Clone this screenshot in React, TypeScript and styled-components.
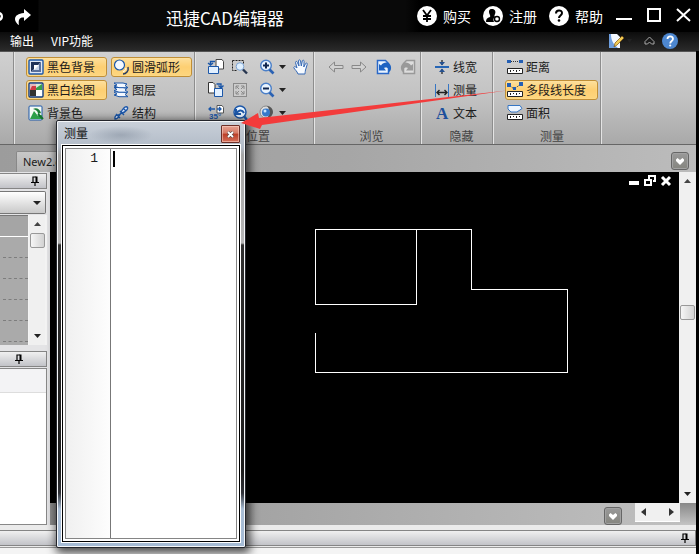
import React from "react";
import styled, { createGlobalStyle, css } from "styled-components";

const Global = createGlobalStyle`
  * { box-sizing: border-box; }
  html, body { margin: 0; background: #000; }
  body { font-family: "Noto Sans CJK SC", "Liberation Sans", sans-serif; font-size: 12px; line-height: 16px; color: #1c1c1c; }
  button, select, textarea { font: inherit; color: inherit; border: 0; padding: 0; margin: 0; background: none; border-radius: 0; outline: 0; }
  svg { display: block; flex: none; overflow: visible; }
`;

const AppFrame = styled.div`
  position: relative;
  min-height: 100vh;
  display: flex;
  flex-direction: column;
  background: #000;
  overflow: hidden;
`;

/* ---------- title and menu ---------- */
const TitleBar = styled.header`
  display: flex;
  align-items: center;
  height: 32px;
  padding-right: 8px;
  background: linear-gradient(90deg, #000 38px, #090909 39px, #090909 58%, #000 60%);
  color: #fff;
`;
const QuickTools = styled.div`
  display: flex;
  gap: 10px;
  width: 166px;
`;
const Title = styled.h1`
  margin: 0;
  padding-top: 3px;
  flex: 1;
  font-size: 17px;
  line-height: 24px;
  font-weight: 400;
  white-space: nowrap;
`;
const Account = styled.nav`
  display: flex;
  gap: 12px;
  margin-right: 12px;
`;
const AccountButton = styled.button`
  display: flex;
  align-items: center;
  gap: 6px;
  font-size: 14px;
  line-height: 20px;
  white-space: nowrap;
`;
const WindowButtons = styled.div`
  display: flex;
  gap: 14px;
`;
const PlainButton = styled.button`
  display: flex;
  align-items: center;
  justify-content: center;
  color: inherit;
`;
const MenuBar = styled.nav`
  display: flex;
  align-items: center;
  height: 19px;
  padding: 0 21px 2px 10px;
  gap: 17px;
  background: linear-gradient(#0c0c0c, #2b2b2b);
  color: #fff;
`;
const MenuItem = styled.button`
  white-space: nowrap;
`;
const MenuTools = styled.div`
  display: flex;
  align-items: center;
  gap: 3px;
  margin-left: auto;
`;

/* ---------- ribbon ---------- */
const Body = styled.div`
  flex: 1;
  display: flex;
  flex-direction: column;
  margin-right: 3px;
  background: #ececec;
`;
const Ribbon = styled.section`
  display: flex;
  height: 94px;
  border-top: 1px solid #555;
  border-bottom: 1px solid #666;
  background: linear-gradient(#d0d0d0, #c2c2c2 50%, #a9a9a9);
`;
const Group = styled.div<{ $width: number; $pad: number }>`
  display: flex;
  flex-direction: column;
  width: ${(p) => p.$width}px;
  padding: 5px 1px 0 ${(p) => p.$pad}px;
  border-right: 1px solid #8d8d8d;
  box-shadow: 1px 0 0 #e4e4e4;
`;
const ToolGrid = styled.div<{ $columns: string; $gap?: number }>`
  display: grid;
  grid-template-columns: ${(p) => p.$columns};
  grid-auto-rows: 20px;
  gap: 3px ${(p) => p.$gap ?? 0}px;
  height: 66px;
`;
const GroupLabel = styled.div<{ $end?: number }>`
  padding: 5px ${(p) => p.$end ?? 0}px 0 0;
  text-align: center;
  color: #444;
`;
const ToolButton = styled.button<{ $active?: boolean }>`
  display: flex;
  align-items: center;
  gap: 3px;
  padding: 0 1px;
  border: 1px solid transparent;
  border-radius: 3px;
  white-space: nowrap;
  ${(p) =>
    p.$active &&
    css`
      border-color: #c08f37;
      background: linear-gradient(#fddf9c, #fdcf72 50%, #fdd67f);
      box-shadow: inset 0 0 1px #fff3c8;
    `}
`;
const IconButton = styled.button`
  display: flex;
  align-items: center;
  gap: 4px;
`;

/* ---------- document tabs ---------- */
const TabRow = styled.div`
  display: flex;
  align-items: flex-end;
  justify-content: space-between;
  height: 27px;
  padding: 0 7px 0 16px;
  background: linear-gradient(90deg, #9c9c9c, #a6a6a6 50%, #bcbcbc);
`;
const Tab = styled.button`
  height: 21px;
  padding: 0 6px;
  border: 1px solid #888;
  border-bottom: 0;
  border-radius: 2px 2px 0 0;
  background: linear-gradient(#c8c8c8, #b4b4b4);
  font-family: "Noto Sans", "Noto Sans CJK SC", sans-serif;
  font-size: 11px;
`;
const DropButton = styled.button`
  display: flex;
  align-items: center;
  justify-content: center;
  width: 18px;
  height: 18px;
  margin: 4px 0 2px;
  border: 1px solid #666;
  border-radius: 3px;
  background: linear-gradient(#999, #85857f);
  box-shadow: inset 0 0 0 1px #a2a2a2;
`;

/* ---------- workspace ---------- */
const Workspace = styled.main`
  flex: 1;
  display: flex;
  min-height: 353px;
`;
const SidePanel = styled.aside`
  display: flex;
  flex-direction: column;
  width: 50px;
  padding: 1px 3px 0 0;
  background: #e4e4e6;
`;
const PanelHeader = styled.div<{ $end: number }>`
  display: flex;
  align-items: center;
  justify-content: flex-end;
  height: 16px;
  padding-right: ${(p) => p.$end}px;
  border: 1px solid #858585;
  border-left: 0;
  background: linear-gradient(#f0f0f0, #c2c3c8);
`;
const ComboWrap = styled.label`
  position: relative;
  display: block;
  margin: 2px 1px 1px 0;
  height: 23px;
  border: 1px solid #777;
  border-left: 0;
  border-radius: 0 2px 2px 0;
  background: linear-gradient(#fff, #c9c9c9);
  svg { position: absolute; right: 4px; top: 9px; pointer-events: none; }
`;
const Combo = styled.select`
  width: 100%;
  height: 100%;
  appearance: none;
`;
const ListArea = styled.div`
  display: flex;
  height: 130px;
  background: #f4f4f4;
`;
const PropertyList = styled.div`
  width: 28px;
  border-top: 1px solid #777;
  background: #aaa;
`;
const PropertyHead = styled.div`
  height: 21px;
  border-bottom: 1px solid #fff;
  background: #a5a5a5;
`;
const PropertyRow = styled.div`
  height: 21px;
  margin-left: 3px;
  border-bottom: 1px dashed #7d7d7d;
`;
const VScroll = styled.div<{ $width: number }>`
  display: flex;
  flex-direction: column;
  align-items: center;
  width: ${(p) => p.$width}px;
  padding: 7px 0;
  background: #f0f0f0;
`;
const Thumb = styled.div`
  width: 15px;
  height: 15px;
  border: 1px solid #999;
  border-radius: 2px;
  background: linear-gradient(90deg, #f6f6f6, #d2d2d2);
`;
const Space = styled.div<{ $size?: number }>`
  flex: ${(p) => (p.$size ? `0 1 ${p.$size}px` : "1")};
`;
const SideBox = styled.div`
  flex: 1;
  margin-top: 1px;
  border: 1px solid #888;
  border-left: 0;
  background: linear-gradient(#f3f3f5 23px, #ddd 23px, #ddd 24px, #fff 24px);
`;
const Gap = styled.div`
  height: 6px;
`;
const Center = styled.div`
  flex: 1;
  min-width: 0;
  display: flex;
  flex-direction: column;
`;
const DrawingRow = styled.div`
  flex: 1;
  display: flex;
  background: #000;
`;
const Canvas = styled.div`
  position: relative;
  flex: 1;
  min-width: 0;
  overflow: hidden;
  color: #fff;
`;
const MdiButtons = styled.div`
  position: absolute;
  top: 3px;
  right: 7px;
  display: flex;
  gap: 4px;
`;
const BottomBar = styled.div`
  display: flex;
  justify-content: flex-end;
  height: 22px;
  background: linear-gradient(90deg, #8c8c8c, #a3a3a3 30%, #c0c0c0);
`;
const HScroll = styled.div`
  display: flex;
  align-items: center;
  justify-content: space-between;
  width: 45px;
  height: 19px;
  margin-left: 13px;
  padding: 0 6px;
  border-bottom: 1px solid #fff;
  background: #f0f0f0;
`;
const Corner = styled.div`
  width: 16px;
  background: linear-gradient(#888, #c4c4c4);
`;
const CommandPanel = styled.footer`
  padding-top: 5px;
  height: 29px;
  background: #ebebeb;
`;
const CommandBody = styled.div`
  height: 8px;
  margin-top: 1px;
  padding-right: 16px;
  border-top: 1px solid #999;
  background: #f4f4f4;
`;

/* ---------- floating measure window ---------- */
const Dialog = styled.section`
  position: absolute;
  left: 56px;
  top: 120px;
  width: 190px;
  height: 428px;
  display: flex;
  flex-direction: column;
  padding: 0 5px 5px;
  border: 1px solid #24262c;
  border-radius: 2px;
  background:
    radial-gradient(ellipse 32px 9px at 64px 14px, rgba(120, 132, 148, 0.45), transparent),
    linear-gradient(#c9d0d9 0, #b3bcc8 26px, #a5a5a5 34px, #b5b5b5 122px, #303030 124px, #1d1d1d 350px, #303238 372px, #a9bdd4 388px, #a6bcd6);
  box-shadow: inset 0 0 0 1px #f4f6f8, 2px 3px 10px 2px rgba(0, 0, 0, 0.7);
`;
const DialogBar = styled.div`
  display: flex;
  align-items: center;
  justify-content: space-between;
  height: 24px;
  padding-left: 2px;
  color: #111;
`;
const CloseButton = styled.button`
  display: flex;
  align-items: center;
  justify-content: center;
  width: 19px;
  height: 18px;
  margin-top: 2px;
  border: 1px solid #6d3028;
  border-radius: 1px;
  background: linear-gradient(#e5a292, #d67965 45%, #bb3d26 50%, #d5705a);
  box-shadow: inset 0 0 0 1px rgba(255, 220, 210, 0.5);
`;
const EditorFrame = styled.div`
  flex: 1;
  display: flex;
  padding: 2px;
  border: 1px solid #000;
  outline: 1px solid #fff;
  background: #fff;
`;
const Editor = styled.div`
  flex: 1;
  min-width: 0;
  display: flex;
  border: 1px solid #858585;
`;
const Gutter = styled.div`
  width: 45px;
  padding: 2px 12px 0 0;
  border-right: 1px solid #777;
  background: linear-gradient(90deg, #f0f0f0, #fdfdfd);
  font-family: "Liberation Mono", monospace;
  font-size: 13px;
  text-align: right;
`;
const Caret = styled.span`
  width: 2px;
  height: 16px;
  margin: 2px 0 0 2px;
  background: #000;
`;
const EditorText = styled.textarea`
  flex: 1;
  min-width: 0;
  padding-top: 2px;
  resize: none;
  font-family: "Liberation Mono", monospace;
`;
const Pointer = styled.svg`
  position: absolute;
  left: 240px;
  top: 86px;
  pointer-events: none;
`;

/* ---------- icons ---------- */
const BLUE = "#1c57a8";
const NAVY = "#123a80";
const Icon = ({ children, size = 16 }: { children: React.ReactNode; size?: number }) => (
  <svg width={size} height={size} viewBox="0 0 16 16" fill="none" aria-hidden="true">
    {children}
  </svg>
);
const Down = ({ w = 7 }: { w?: number }) => (
  <svg width={w} height="4" viewBox="0 0 8 4" preserveAspectRatio="none">
    <path d="M0 0h8L4 4z" fill="#222" />
  </svg>
);
const Up = () => (
  <svg width="7" height="4" viewBox="0 0 8 4" preserveAspectRatio="none">
    <path d="M0 4h8L4 0z" fill="#444" />
  </svg>
);
const Pin = () => (
  <svg width="8" height="10" viewBox="0 0 8 10" fill="none" stroke="#000">
    <path d="M2 6V1h3M0 6.500h8M4 7v3" strokeWidth="1.200" />
    <path d="M5.500 .5v6" strokeWidth="2" />
  </svg>
);
const Heart = () => (
  <svg width="8" height="7" viewBox="0 0 8 7">
    <path d="M0 1.500L1.500 0 4 2 6.500 0 8 1.500V3L4 7 0 3z" fill="#fff" />
  </svg>
);

const BlackBg = () => (
  <Icon>
    <rect x="1" y="1" width="14" height="14" rx="1" fill="#dfe7f4" stroke={BLUE} strokeWidth="1.400" />
    <path d="M3 13V3h10z" fill="#1f3157" />
    <path d="M13 3v10H3z" fill="#5a709b" />
    <path d="M6 6h5v5H6z" fill="#fff" />
    <path d="M6 11l5-5v5z" fill="#c9d5ea" />
  </Icon>
);
const Checker = () => (
  <Icon>
    <rect x="1" y="1" width="14" height="14" rx="1" fill="#fff" stroke={NAVY} strokeWidth="1.400" />
    <path d="M2 2h6v6H2z" fill="#e3b9bd" />
    <path d="M4 4h4v4H2z" fill="#d03b44" />
    <path d="M8 2h6v6H8z" fill="#38a04c" />
    <path d="M8 2h6L8 6z" fill="#d5ecd8" />
    <path d="M2 8h6v6H2z" fill="#333" />
    <path d="M8 8h6v6H8z" fill="#fff" />
  </Icon>
);
const ColorBg = () => (
  <Icon>
    <rect x="1" y="1" width="13" height="14" rx="1" fill="#f5fbf5" stroke={BLUE} />
    <path d="M2 14L6 6l4 5 4-1v4z" fill="#2ca049" />
    <path d="M5 4c3-2 7 0 8 4l-3 1C10 6 8 5 5 4z" fill="#1f7f38" />
    <path d="M10 9l5 5" stroke="#137030" strokeWidth="2" />
  </Icon>
);
const ArcIcon = () => (
  <Icon>
    <circle cx="6.500" cy="6" r="5" fill="#f3f8ff" stroke={BLUE} strokeWidth="1.200" />
    <path d="M15 8c1 4-2 7-5 7" stroke="#263c63" strokeWidth="1.500" />
    <path d="M10 12.500c1.500 0 3-1.500 3-3.500" stroke="#fff" />
  </Icon>
);
const Layers = () => (
  <Icon>
    {[10, 5.500, 1].map((y) => (
      <path key={y} d={`M1 ${y}h9l4 1-2 1.500 3 2.200H6L1 ${y + 3}l3-1z`} fill="#f3f8ff" stroke={BLUE} />
    ))}
  </Icon>
);
const Structure = () => (
  <Icon>
    <path d="M2 14C1 8 7 12 8 8s4-7 6-6-1 5-5 6-2 6-7 6zM7 6l4 4M3 9l4 4M10 3l3 3" stroke={BLUE} strokeWidth="1.400" fill="#dfeaff" />
  </Icon>
);
const WindowBack = () => (
  <Icon>
    <path d="M8 .5h6l1.500 2V10H8z" fill="#fff" stroke="#444" />
    <path d="M.5 7.500h10v7H.500z" fill="#e2f0ff" stroke={BLUE} />
    <path d="M7 2.500H2.500V6M0 4l2.500 2L5 4" stroke={BLUE} strokeWidth="1.400" />
  </Icon>
);
const WindowForward = () => (
  <Icon>
    <path d="M.5.5H5l2 2V11H.500z" fill="#fff" stroke="#333" />
    <path d="M6.500 6.500h8v8h-8z" fill="#e2f0ff" stroke={BLUE} />
    <path d="M8.500 2H13v3.500M10.500 3.500L13 6l2.500-2.500" stroke={BLUE} strokeWidth="1.400" />
  </Icon>
);
const Rotate35 = () => (
  <Icon>
    <path d="M9 .5h5l1.500 2V8H9z" fill="#fff" stroke="#555" />
    <path d="M1 4h6M9 4h4M3 2L1 4l2 2M11 2l2 2-2 2" stroke={BLUE} strokeWidth="1.300" />
    <text x="1" y="14" fontSize="8" fontWeight="700" fontFamily="Liberation Sans, sans-serif" fill={BLUE}>35°</text>
  </Icon>
);
const ZoomArea = () => (
  <Icon>
    <path d="M.5 1.500h11v3M.5 1.500v10h4" stroke="#222" strokeDasharray="2 1" />
    <circle cx="8" cy="7.500" r="3.800" fill="#dff0ff" stroke="#7da4d4" />
    <path d="M11 10.500l4 4" stroke="#26354f" strokeWidth="2.400" />
  </Icon>
);
const FitIcon = () => (
  <Icon>
    <rect x="1.500" y="1.500" width="13" height="13" fill="#ccc" stroke="#8a8a8a" />
    <path d="M4 7V4h3M9 4h3v3M12 9v3H9M7 12H4V9M4 4l3 3M12 4L9 7M12 12L9 9M4 12l3-3" stroke="#8a8a8a" />
  </Icon>
);
const ZoomIcon = ({ plus }: { plus?: boolean }) => (
  <Icon>
    <circle cx="7" cy="6.500" r="5.300" fill="#e9f4ff" stroke="#4a7fc8" strokeWidth="1.400" />
    <path d={plus ? "M4 6.500h6M7 3.500v6" : "M4 6.500h6"} stroke="#10264f" strokeWidth="2" />
    <path d="M10.500 10.500l4 4" stroke="#2b62b3" strokeWidth="2.600" />
  </Icon>
);
const ZoomBack = () => (
  <Icon>
    <circle cx="8" cy="7" r="6" fill="#e9f4ff" stroke={BLUE} strokeWidth="1.500" />
    <path d="M4 4v5h5M4 9c2-4 6-5 8-1" stroke={BLUE} strokeWidth="2" />
    <path d="M12 11l3 4" stroke={BLUE} strokeWidth="2.400" />
  </Icon>
);
const Orb = () => (
  <Icon>
    <circle cx="7" cy="7" r="6" fill="#ddd" stroke="#888" />
    <path d="M8 1a6 6 0 010 12c3-3 3-9 0-12z" fill="#555" />
    <circle cx="7" cy="7.500" r="4" fill="#3679ca" />
    <circle cx="6" cy="6" r="1.500" fill="#c8e5ff" />
  </Icon>
);
const Hand = () => (
  <Icon>
    <path d="M5 15C4 12 2 11 .7 8.500 1.500 7 3 8 4 9L2.500 3.500c0-1.400 1.500-1.400 1.900 0L6 7 5.500 1.800c.2-1.300 1.700-1.300 2 0L8.300 7l1-5c.4-1.300 1.900-1 1.800.4L10.800 8l1.800-3.500c.8-1 2-.3 1.600 1L12.500 11c-.3 2-.5 3-.5 4z" fill="#f6faff" stroke="#3468b5" />
  </Icon>
);
const ArrowIcon = ({ right }: { right?: boolean }) => (
  <Icon>
    <path d={right ? "M15 8L9.500 3v3.500H1v3h8.500V13z" : "M1 8l5.500-5v3.500H15v3H6.500V13z"} fill="#d2d2d2" stroke="#888" />
  </Icon>
);
const PageTurn = ({ off }: { off?: boolean }) => (
  <Icon>
    <g transform={off ? "matrix(-1 0 0 1 16 0)" : undefined}>
      <path d="M1.500 1.500h8l3 3v10h-11z" fill={off ? "#ddd" : "#eaf4ff"} stroke={off ? "#999" : "#2a68c8"} strokeWidth="1.500" />
      <path d="M3 5l2 1.500C9 1 16 4 15 10c-.3 2-1.500 3-3 3.500 1.500-3 0-6-4-4.500l2 2.500H3z" fill={off ? "#999" : "#1e63c2"} />
    </g>
  </Icon>
);
const LineWidth = () => (
  <Icon>
    <path d="M1 7h14v2H1z" fill="#2766b5" />
    <path d="M8 1v5M8 10v5" stroke="#333" strokeWidth="1.400" />
    <path d="M5 3h6L8 6.500zM5 13h6L8 9.500z" fill="#24508f" />
  </Icon>
);
const Measure = () => (
  <Icon>
    <path d="M1.500 2v13M14.500 2v13" stroke="#3676c4" />
    <path d="M3 10.500h10M5.500 8L3 10.500 5.500 13M10.500 8l2.500 2.500-2.500 2.500" stroke="#222" strokeWidth="1.400" />
  </Icon>
);
const LetterA = () => (
  <Icon>
    <text x="2" y="14" fontSize="17" fontWeight="700" fontFamily="Liberation Serif, serif" fill="#1c4f9c">A</text>
  </Icon>
);
const Ruler = ({ kind }: { kind: "line" | "poly" | "area" }) => (
  <Icon>
    {kind === "line" && (
      <>
        <path d="M2 2.500h12" stroke="#333" strokeDasharray="1 1" />
        <path d="M0 1h4v3H0zM12 1h4v3h-4z" fill="#245fb4" />
      </>
    )}
    {kind === "poly" && (
      <>
        <path d="M2 3l5 4 7-5" stroke="#333" strokeDasharray="1 1" />
        <path d="M0 1h4v4H0zM6 5h3v3H6zM12 0h4v4h-4z" fill="#245fb4" />
      </>
    )}
    {kind === "area" && <path d="M1 .5h12l2 3-5 3.500H4L1 4z" fill="#eef6ff" stroke="#3676c4" />}
    <path d="M.5 9.500h15v5H.500z" fill="#fff" stroke="#222" />
    <path d="M3.500 11v2M6.500 11v1M9.500 11v2M12.500 11v1" stroke="#222" />
  </Icon>
);
const Disc = ({ children }: { children: React.ReactNode }) => (
  <svg width="20" height="20" viewBox="0 0 20 20" fill="none" aria-hidden="true">
    <circle cx="10" cy="10" r="10" fill="#fff" />
    {children}
  </svg>
);

const App = () => (
  <AppFrame>
    <Global />
    <TitleBar>
      <QuickTools>
        <PlainButton aria-label="撤销">
          <svg width="4" height="16" viewBox="0 0 4 16"><path d="M0 4c4 1 4 8 0 9V10c1-1 1-3 0-3z" fill="#fff" /></svg>
        </PlainButton>
        <PlainButton aria-label="重做">
          <svg width="17" height="19" viewBox="0 0 17 19">
            <path d="M10 2l7 6-7 6V10.500C6 10 4 12 5 18 0 15-2 7 10 6z" fill="#fff" />
          </svg>
        </PlainButton>
      </QuickTools>
      <Title>迅捷CAD编辑器</Title>
      <Account>
        <AccountButton>
          <Disc><path d="M6 4l4 5.500L14 4M10 9.500V16M6 10h8M6 13h8" stroke="#000" strokeWidth="1.800" /></Disc>
          购买
        </AccountButton>
        <AccountButton>
          <Disc>
            <path d="M9 3c3 0 4 2.500 3 5-.5 1.500-1 2 0 3-2 1-2 3-1 5H3c0-3 1-4 4-5 .5-1 0-2-.5-3C5.500 5 6 3 9 3z" fill="#000" />
            <circle cx="14" cy="13" r="2.500" fill="#fff" stroke="#000" strokeWidth="1.400" />
          </Disc>
          注册
        </AccountButton>
        <AccountButton>
          <Disc>
            <path d="M7 7.500c0-4 6-4 6-.5 0 2.500-3 2.500-3 5" stroke="#000" strokeWidth="2" />
            <circle cx="10" cy="14.500" r="1.300" fill="#000" />
          </Disc>
          帮助
        </AccountButton>
      </Account>
      <WindowButtons>
        <PlainButton aria-label="最小化"><Icon><path d="M1 11h16" stroke="#fff" strokeWidth="2" /></Icon></PlainButton>
        <PlainButton aria-label="最大化"><Icon><path d="M3 1h12v12H3z" stroke="#fff" strokeWidth="2" /></Icon></PlainButton>
        <PlainButton aria-label="关闭"><Icon><path d="M2 1l13 12M15 1L2 13" stroke="#fff" strokeWidth="2" /></Icon></PlainButton>
      </WindowButtons>
    </TitleBar>
    <MenuBar>
      <MenuItem>输出</MenuItem>
      <MenuItem>VIP功能</MenuItem>
      <MenuTools>
        <PlainButton aria-label="编辑样式">
          <Icon>
            <path d="M1 1h8l3 3v11H1z" fill="#f4f8ff" />
            <path d="M1 15V1h2c0 6 2 10 7 14z" fill="#6e9fe0" />
            <path d="M6 14l1-4 7-7 2 2-7 7z" fill="#f2cb55" stroke="#775114" strokeWidth=".7" />
          </Icon>
        </PlainButton>
        <Down w={5} />
        <PlainButton aria-label="折叠功能区">
          <svg width="24" height="12" viewBox="4 0 24 12" fill="none" stroke="#aaa">
            <path d="M14 6.500L18.500 2 23 6.500V9h-2.500l-2-2-2 2H14z" />
          </svg>
        </PlainButton>
        <PlainButton aria-label="帮助主题">
          <Icon>
            <circle cx="8" cy="8" r="8" fill="#4d87d0" />
            <path d="M5.500 6C5.500 2.500 11 2.500 11 6c0 2-2.800 2-2.800 4.500" stroke="#fff" strokeWidth="1.800" />
            <circle cx="8.200" cy="12.500" r="1.100" fill="#fff" />
          </Icon>
        </PlainButton>
      </MenuTools>
    </MenuBar>
    <Body>
      <Ribbon>
        <Group $width={14} $pad={0} />
        <Group $width={181} $pad={12}>
          <ToolGrid $columns="81px 81px" $gap={4}>
            <ToolButton $active><BlackBg />黑色背景</ToolButton>
            <ToolButton $active><ArcIcon />圆滑弧形</ToolButton>
            <ToolButton $active><Checker />黑白绘图</ToolButton>
            <ToolButton><Layers />图层</ToolButton>
            <ToolButton><ColorBg />背景色</ToolButton>
            <ToolButton><Structure />结构</ToolButton>
          </ToolGrid>
        </Group>
        <Group $width={119} $pad={13}>
          <ToolGrid $columns="24px 27px 34px 16px">
            <IconButton aria-label="上一窗口"><WindowBack /></IconButton>
            <IconButton aria-label="窗口缩放"><ZoomArea /></IconButton>
            <IconButton aria-label="放大"><ZoomIcon plus /><Down /></IconButton>
            <IconButton aria-label="平移"><Hand /></IconButton>
            <IconButton aria-label="下一窗口"><WindowForward /></IconButton>
            <IconButton aria-label="适合窗口"><FitIcon /></IconButton>
            <IconButton aria-label="缩小"><ZoomIcon /><Down /></IconButton>
            <span />
            <IconButton aria-label="旋转"><Rotate35 /></IconButton>
            <IconButton aria-label="缩放还原"><ZoomBack /></IconButton>
            <IconButton aria-label="视图"><Orb /><Down /></IconButton>
          </ToolGrid>
          <GroupLabel $end={4}>位置</GroupLabel>
        </Group>
        <Group $width={107} $pad={14}>
          <ToolGrid $columns="23px 25px 24px 16px">
            <IconButton aria-label="后退" disabled><ArrowIcon /></IconButton>
            <IconButton aria-label="前进" disabled><ArrowIcon right /></IconButton>
            <IconButton aria-label="撤回视图"><PageTurn /></IconButton>
            <IconButton aria-label="恢复视图" disabled><PageTurn off /></IconButton>
          </ToolGrid>
          <GroupLabel $end={4}>浏览</GroupLabel>
        </Group>
        <Group $width={72} $pad={11}>
          <ToolGrid $columns="50px">
            <ToolButton><LineWidth />线宽</ToolButton>
            <ToolButton><Measure />测量</ToolButton>
            <ToolButton><LetterA />文本</ToolButton>
          </ToolGrid>
          <GroupLabel>隐藏</GroupLabel>
        </Group>
        <Group $width={108} $pad={12}>
          <ToolGrid $columns="93px">
            <ToolButton><Ruler kind="line" />距离</ToolButton>
            <ToolButton $active><Ruler kind="poly" />多段线长度</ToolButton>
            <ToolButton><Ruler kind="area" />面积</ToolButton>
          </ToolGrid>
          <GroupLabel>测量</GroupLabel>
        </Group>
      </Ribbon>
      <TabRow>
        <Tab>New2.dxf</Tab>
        <DropButton aria-label="文档列表"><Heart /></DropButton>
      </TabRow>
      <Workspace>
        <SidePanel>
          <PanelHeader $end={7}><Pin /></PanelHeader>
          <ComboWrap>
            <Combo aria-label="对象" />
            <Down w={8} />
          </ComboWrap>
          <ListArea>
            <PropertyList>
              <PropertyHead />
              {[1, 2, 3, 4, 5].map((n) => <PropertyRow key={n} />)}
            </PropertyList>
            <Space $size={1} />
            <VScroll $width={16}>
              <Up />
              <Space $size={7} />
              <Thumb />
              <Space />
              <Down />
            </VScroll>
          </ListArea>
          <Gap />
          <PanelHeader $end={23}><Pin /></PanelHeader>
          <SideBox />
        </SidePanel>
        <Center>
          <DrawingRow>
            <Canvas>
              <svg width="560" height="240" viewBox="0 0 560 240" fill="none" stroke="#fff" shapeRendering="crispEdges">
                <path d="M265.500 161v39.500h252v-83h-96v-60h-156v75h101v-75" />
              </svg>
              <MdiButtons>
                <PlainButton aria-label="最小化图纸"><svg width="12" height="12"><path d="M1 6h10v4H1z" fill="#fff" /></svg></PlainButton>
                <PlainButton aria-label="还原图纸">
                  <svg width="12" height="12" fill="none" stroke="#fff" strokeWidth="2"><path d="M5 4V1h6v5H9M1 5h6v5H1z" /></svg>
                </PlainButton>
                <PlainButton aria-label="关闭图纸"><svg width="12" height="12" stroke="#fff" strokeWidth="3"><path d="M2 2l8 8M10 2l-8 8" /></svg></PlainButton>
              </MdiButtons>
            </Canvas>
            <VScroll $width={17}>
              <Up />
              <Space $size={122} />
              <Thumb />
              <Space />
              <Down />
            </VScroll>
          </DrawingRow>
          <BottomBar>
            <DropButton aria-label="布局列表"><Heart /></DropButton>
            <HScroll>
              <svg width="5" height="8"><path d="M5 0v8L0 4z" fill="#333" /></svg>
              <svg width="5" height="8"><path d="M0 0v8l5-4z" fill="#333" /></svg>
            </HScroll>
            <Corner />
          </BottomBar>
        </Center>
      </Workspace>
      <CommandPanel>
        <PanelHeader $end={6}><Pin /></PanelHeader>
        <CommandBody />
      </CommandPanel>
    </Body>

    <Dialog role="dialog" aria-label="测量">
      <DialogBar>
        测量
        <CloseButton aria-label="关闭测量">
          <svg width="7" height="7" viewBox="0 0 7 7"><path d="M1 1l5 5M6 1L1 6" stroke="#444" strokeWidth="3" /><path d="M1 1l5 5M6 1L1 6" stroke="#fff" strokeWidth="1.800" /></svg>
        </CloseButton>
      </DialogBar>
      <EditorFrame>
        <Editor>
          <Gutter>1</Gutter>
          <Caret />
          <EditorText aria-label="测量结果" />
        </Editor>
      </EditorFrame>
    </Dialog>
    <Pointer width="270" height="46" viewBox="0 0 270 46">
      <path d="M1 37L18 27l1 5L267 4.500 22 39l-2 4z" fill="#f33b3b" />
    </Pointer>
  </AppFrame>
);

export default App;
